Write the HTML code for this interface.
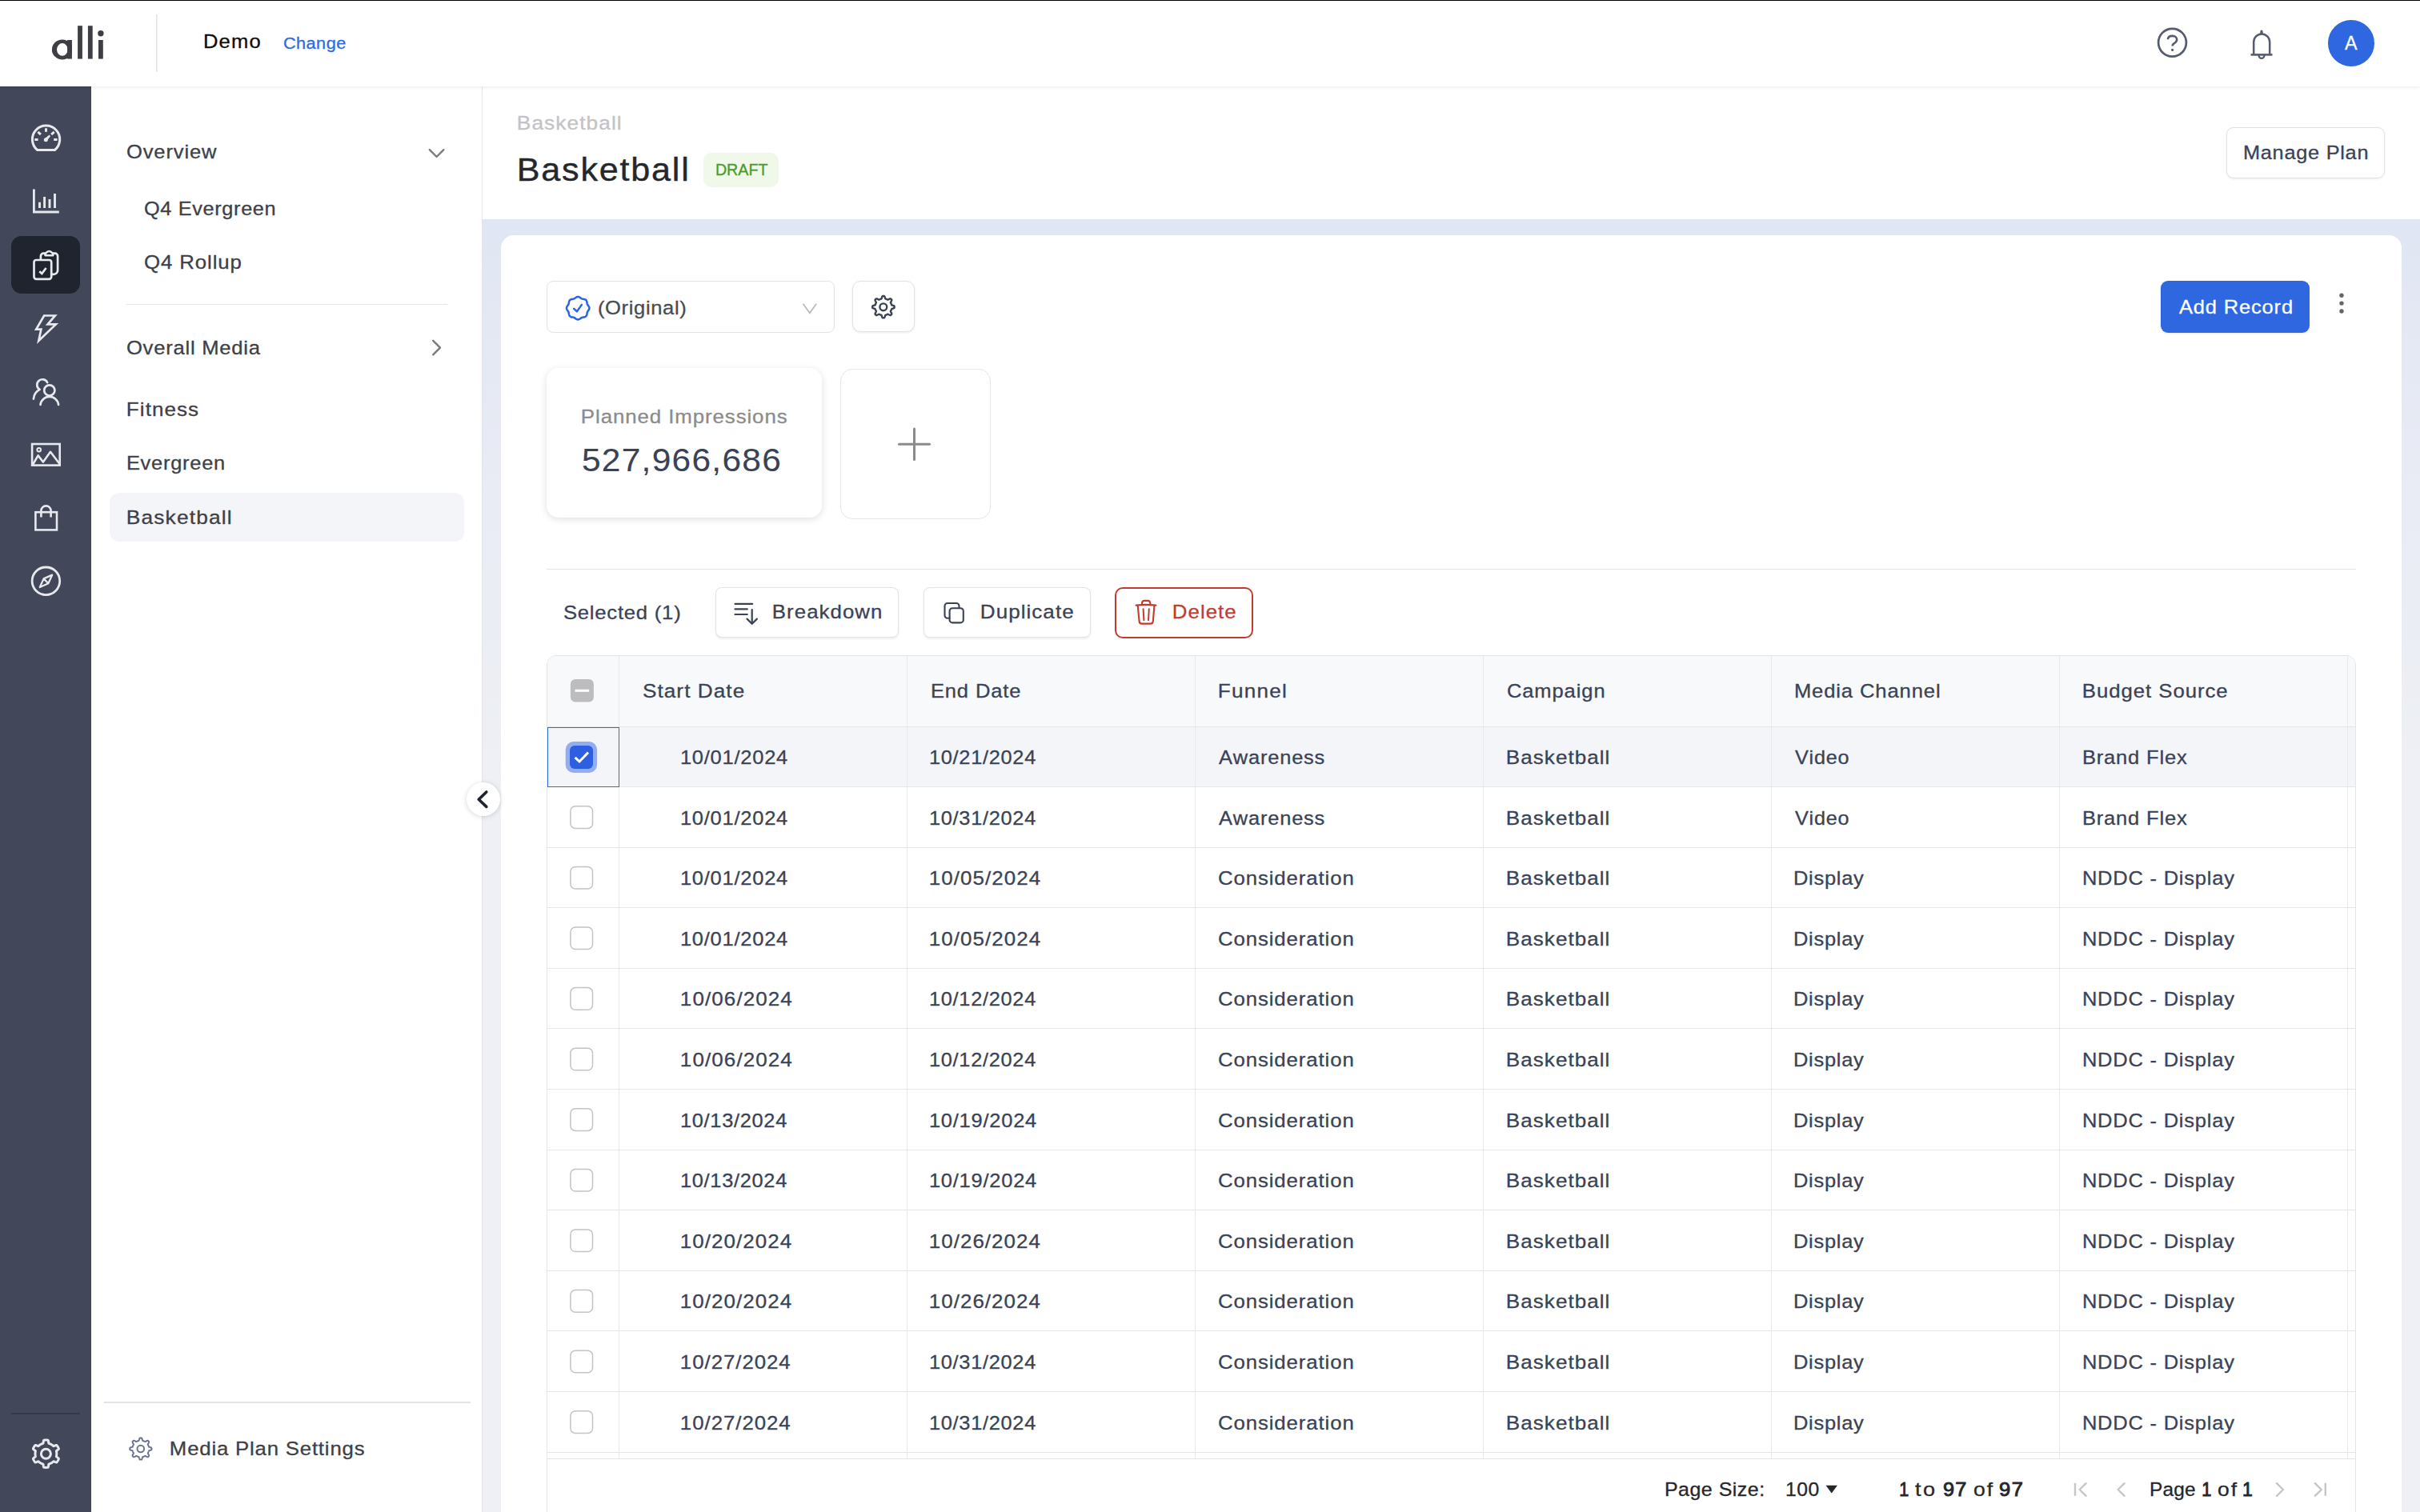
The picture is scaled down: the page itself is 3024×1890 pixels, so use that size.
<!DOCTYPE html>
<html><head><meta charset="utf-8"><title>Basketball - Media Plan</title>
<style>
html,body{margin:0;padding:0;background:#fff;}
body{width:3024px;height:1890px;overflow:hidden;position:relative;font-family:"Liberation Sans",sans-serif;}
#root{position:absolute;left:0;top:0;width:3024px;height:1890px;overflow:hidden;transform-origin:0 0;}
@media (max-width:2000px){body{width:1512px;height:945px}#root{transform:scale(0.5)}}
.b{position:absolute;}
.t{position:absolute;white-space:pre;line-height:1em;font-kerning:none;font-family:"Liberation Sans",sans-serif;z-index:2;-webkit-text-stroke:0.3px currentColor}
.ov{position:absolute;left:0;top:0;z-index:8;pointer-events:none}
</style></head><body><div id="root">
<div class="b" style="left:0;top:0;width:3024px;height:1px;background:#000;z-index:5"></div>
<div class="b" style="left:0;top:1px;width:3024px;height:107px;background:#fff;box-shadow:0 1px 5px rgba(0,0,0,0.085);z-index:3"></div>
<div class="b" style="left:0;top:108px;width:114px;height:1782px;background:#424759"></div>
<div class="b" style="left:14px;top:295px;width:86px;height:72px;background:#20242f;border-radius:13px"></div>
<div class="b" style="left:14px;top:1766px;width:86px;height:2px;background:#343849"></div>
<div class="b" style="left:114px;top:108px;width:488px;height:1782px;background:#fff"></div>
<div class="b" style="left:602px;top:108px;width:1px;height:1782px;background:#e6e6e9"></div>
<div class="b" style="left:158px;top:379.5px;width:401px;height:1.5px;background:#e6e6e9"></div>
<div class="b" style="left:137px;top:616px;width:443px;height:61px;background:#f4f5f9;border-radius:12px"></div>
<div class="b" style="left:130px;top:1752px;width:458px;height:1.5px;background:#e4e4e7"></div>
<div class="b" style="left:603px;top:108px;width:2421px;height:166px;background:#fff"></div>
<div class="b" style="left:603px;top:274px;width:2421px;height:1616px;background:linear-gradient(#e0e6f3 0px,#e8ebf4 300px,#eef0f5 700px,#eff0f5 1616px)"></div>
<div class="b" style="left:626px;top:294px;width:2375px;height:1700px;background:#fff;border-radius:16px"></div>
<div class="b" style="left:879px;top:191px;width:94px;height:43px;background:#eff8e9;border-radius:10px"></div>
<div class="b" style="left:2781.5px;top:158.5px;width:198.5px;height:64px;box-sizing:border-box;border:1.5px solid #e2e2e4;border-radius:9px;background:#fff;box-shadow:0 1px 3px rgba(0,0,0,0.07)"></div>
<div class="b" style="left:682.6px;top:350.8px;width:360.5px;height:65.4px;box-sizing:border-box;border:1.5px solid #e3e3e6;border-radius:8px;background:#fff"></div>
<div class="b" style="left:1065.2px;top:350.8px;width:78.2px;height:64.4px;box-sizing:border-box;border:1.5px solid #e3e3e6;border-radius:10px;background:#fff;box-shadow:0 1px 3px rgba(0,0,0,0.08)"></div>
<div class="b" style="left:2700px;top:351px;width:186px;height:65px;background:#2f67e0;border-radius:9px;box-shadow:0 1px 3px rgba(0,0,0,0.1)"></div>
<div class="b" style="left:683px;top:460px;width:344px;height:187px;background:#fff;border-radius:15px;box-shadow:0 2px 10px rgba(0,0,0,0.13)"></div>
<div class="b" style="left:1049.5px;top:460.5px;width:188px;height:188px;box-sizing:border-box;border:1.5px solid #e6e6e9;border-radius:15px;background:#fff"></div>
<div class="b" style="left:683px;top:711px;width:2261px;height:1px;background:#e4e5e8"></div>
<div class="b" style="left:893.5px;top:733.5px;width:229.5px;height:63.5px;box-sizing:border-box;border:1.5px solid #e3e3e6;border-radius:8px;background:#fff;box-shadow:0 1.5px 3px rgba(0,0,0,0.07)"></div>
<div class="b" style="left:1154px;top:733.5px;width:208.5px;height:63.5px;box-sizing:border-box;border:1.5px solid #e3e3e6;border-radius:8px;background:#fff;box-shadow:0 1.5px 3px rgba(0,0,0,0.07)"></div>
<div class="b" style="left:1392.5px;top:733.5px;width:173px;height:64px;box-sizing:border-box;border:2px solid #c23b2f;border-radius:10px;background:#fff"></div>
<div class="b" style="left:683.0px;top:819.0px;width:2261.0px;height:1200px;box-sizing:border-box;border:1px solid #e4e5e8;border-radius:12px;background:#fff;overflow:hidden"></div>
<div class="b" style="left:684.0px;top:820.0px;width:2259.0px;height:89px;background:#f8f9fb;border-radius:11px 11px 0 0"></div>
<div class="b" style="left:684.0px;top:908px;width:2259.0px;height:1px;background:#e4e5e8"></div>
<div class="b" style="left:684.0px;top:909px;width:2259.0px;height:74px;background:#f4f5f9"></div>
<div class="b" style="left:684.0px;top:983px;width:2259.0px;height:1px;background:#e5e6e9"></div>
<div class="b" style="left:684.0px;top:1059px;width:2259.0px;height:1px;background:#e5e6e9"></div>
<div class="b" style="left:684.0px;top:1134px;width:2259.0px;height:1px;background:#e5e6e9"></div>
<div class="b" style="left:684.0px;top:1210px;width:2259.0px;height:1px;background:#e5e6e9"></div>
<div class="b" style="left:684.0px;top:1285px;width:2259.0px;height:1px;background:#e5e6e9"></div>
<div class="b" style="left:684.0px;top:1361px;width:2259.0px;height:1px;background:#e5e6e9"></div>
<div class="b" style="left:684.0px;top:1437px;width:2259.0px;height:1px;background:#e5e6e9"></div>
<div class="b" style="left:684.0px;top:1512px;width:2259.0px;height:1px;background:#e5e6e9"></div>
<div class="b" style="left:684.0px;top:1588px;width:2259.0px;height:1px;background:#e5e6e9"></div>
<div class="b" style="left:684.0px;top:1663px;width:2259.0px;height:1px;background:#e5e6e9"></div>
<div class="b" style="left:684.0px;top:1739px;width:2259.0px;height:1px;background:#e5e6e9"></div>
<div class="b" style="left:684.0px;top:1815px;width:2259.0px;height:1px;background:#e5e6e9"></div>
<div class="b" style="left:684.0px;top:1822.5px;width:2259.0px;height:1px;background:#e4e5e8"></div>
<div class="b" style="left:684.0px;top:1823.5px;width:2259.0px;height:100px;background:#fff"></div>
<div class="b" style="left:773px;top:820.0px;width:1px;height:1002.5px;background:#e8e9ec"></div>
<div class="b" style="left:1133px;top:820.0px;width:1px;height:1002.5px;background:#e8e9ec"></div>
<div class="b" style="left:1493px;top:820.0px;width:1px;height:1002.5px;background:#e8e9ec"></div>
<div class="b" style="left:1853px;top:820.0px;width:1px;height:1002.5px;background:#e8e9ec"></div>
<div class="b" style="left:2213px;top:820.0px;width:1px;height:1002.5px;background:#e8e9ec"></div>
<div class="b" style="left:2573px;top:820.0px;width:1px;height:1002.5px;background:#e8e9ec"></div>
<div class="b" style="left:2933px;top:820.0px;width:1px;height:1002.5px;background:#e8e9ec"></div>
<div class="b" style="left:683.5px;top:908.5px;width:90.5px;height:75px;box-sizing:border-box;border:1.6px solid #2f6ae3"></div>
<div class="b" style="left:582.5px;top:978px;width:42px;height:42px;border-radius:50%;background:#fff;box-shadow:0 1px 6px rgba(0,0,0,0.16);z-index:6"></div>
<div class="b" style="left:2909px;top:25px;width:57.5px;height:57.5px;border-radius:50%;background:#2f67e0;z-index:4"></div>
<div class="t" style="left:253.62px;top:40.43px;font-size:24.17px;letter-spacing:1.18px;color:#0b0b0c;transform:scaleX(1.0578);transform-origin:1.98px 0;z-index:4">Demo</div>
<div class="t" style="left:354.13px;top:43.07px;font-size:21.06px;letter-spacing:0.44px;color:#2d6ae3;transform:scaleX(1.0305);transform-origin:1.07px 0;z-index:4">Change</div>
<div class="t" style="left:2929.95px;top:41.69px;font-size:23.98px;letter-spacing:0px;color:#fff;transform:scaleX(0.9712);transform-origin:0.05px 0;z-index:5">A</div>
<div class="t" style="left:158.26px;top:178.33px;font-size:24.17px;letter-spacing:0.82px;color:#3d4047;transform:scaleX(1.0577);transform-origin:1.14px 0">Overview</div>
<div class="t" style="left:179.86px;top:248.93px;font-size:24.17px;letter-spacing:0.63px;color:#3d4047;transform:scaleX(1.0470);transform-origin:1.14px 0">Q4 Evergreen</div>
<div class="t" style="left:179.86px;top:316.03px;font-size:24.17px;letter-spacing:0.87px;color:#3d4047;transform:scaleX(1.0664);transform-origin:1.14px 0">Q4 Rollup</div>
<div class="t" style="left:158.46px;top:422.73px;font-size:24.17px;letter-spacing:0.73px;color:#3d4047;transform:scaleX(1.0591);transform-origin:1.14px 0">Overall Media</div>
<div class="t" style="left:157.62px;top:499.83px;font-size:24.17px;letter-spacing:0.98px;color:#3d4047;transform:scaleX(1.0784);transform-origin:1.98px 0">Fitness</div>
<div class="t" style="left:157.62px;top:567.23px;font-size:24.17px;letter-spacing:0.71px;color:#3d4047;transform:scaleX(1.0529);transform-origin:1.98px 0">Evergreen</div>
<div class="t" style="left:157.62px;top:634.53px;font-size:24.17px;letter-spacing:1.06px;color:#3d4047;transform:scaleX(1.0886);transform-origin:1.98px 0">Basketball</div>
<div class="t" style="left:211.77px;top:1799.03px;font-size:24.17px;letter-spacing:0.77px;color:#3d4047;transform:scaleX(1.0653);transform-origin:1.98px 0">Media Plan Settings</div>
<div class="t" style="left:645.92px;top:142.43px;font-size:24.17px;letter-spacing:1.02px;color:#c3c3c5;transform:scaleX(1.0847);transform-origin:1.98px 0">Basketball</div>
<div class="t" style="left:646.03px;top:193.29px;font-size:39.81px;letter-spacing:1.65px;color:#25272b;transform:scaleX(1.0833);transform-origin:3.27px 0;-webkit-text-stroke:0.4px #25272b">Basketball</div>
<div class="t" style="left:893.89px;top:203.05px;font-size:19.67px;letter-spacing:0.01px;color:#4a9b2c">DRAFT</div>
<div class="t" style="left:2802.82px;top:178.53px;font-size:24.17px;letter-spacing:0.69px;color:#3a4256;transform:scaleX(1.0495);transform-origin:1.98px 0">Manage Plan</div>
<div class="t" style="left:746.5px;top:373.13px;font-size:24.17px;letter-spacing:0.61px;color:#4a4b4f;transform:scaleX(1.0570);transform-origin:1.5px 0">(Original)</div>
<div class="t" style="left:2722.85px;top:371.53px;font-size:24.17px;letter-spacing:0.78px;color:#ffffff;transform:scaleX(1.0557);transform-origin:0.05px 0">Add Record</div>
<div class="t" style="left:726.22px;top:508.83px;font-size:24.17px;letter-spacing:0.86px;color:#8b8b8d;transform:scaleX(1.0692);transform-origin:1.98px 0">Planned Impressions</div>
<div class="t" style="left:727.39px;top:555.89px;font-size:40.29px;letter-spacing:1.2px;color:#3a4256;transform:scaleX(1.0545);transform-origin:1.61px 0;-webkit-text-stroke:0.1px #3a4256">527,966,686</div>
<div class="t" style="left:703.8px;top:753.93px;font-size:24.17px;letter-spacing:0.72px;color:#3a4256;transform:scaleX(1.0621);transform-origin:1.1px 0">Selected (1)</div>
<div class="t" style="left:964.82px;top:753.23px;font-size:24.17px;letter-spacing:0.99px;color:#3a4256;transform:scaleX(1.0676);transform-origin:1.98px 0">Breakdown</div>
<div class="t" style="left:1225.02px;top:753.23px;font-size:24.17px;letter-spacing:0.95px;color:#3a4256;transform:scaleX(1.0782);transform-origin:1.98px 0">Duplicate</div>
<div class="t" style="left:1464.82px;top:753.23px;font-size:24.17px;letter-spacing:0.94px;color:#c23b2f;transform:scaleX(1.0707);transform-origin:1.98px 0">Delete</div>
<div class="t" style="left:802.9px;top:851.83px;font-size:24.17px;letter-spacing:0.98px;color:#3a4256;transform:scaleX(1.0830);transform-origin:1.1px 0">Start Date</div>
<div class="t" style="left:1162.72px;top:851.83px;font-size:24.17px;letter-spacing:0.81px;color:#3a4256;transform:scaleX(1.0580);transform-origin:1.98px 0">End Date</div>
<div class="t" style="left:1521.52px;top:851.83px;font-size:24.17px;letter-spacing:1.14px;color:#3a4256;transform:scaleX(1.0812);transform-origin:1.98px 0">Funnel</div>
<div class="t" style="left:1882.67px;top:851.83px;font-size:24.17px;letter-spacing:0.86px;color:#3a4256;transform:scaleX(1.0562);transform-origin:1.23px 0">Campaign</div>
<div class="t" style="left:2242.42px;top:851.83px;font-size:24.17px;letter-spacing:0.81px;color:#3a4256;transform:scaleX(1.0611);transform-origin:1.98px 0">Media Channel</div>
<div class="t" style="left:2602.02px;top:851.83px;font-size:24.17px;letter-spacing:0.88px;color:#3a4256;transform:scaleX(1.0670);transform-origin:1.98px 0">Budget Source</div>
<div class="t" style="left:850.36px;top:935.03px;font-size:24.17px;letter-spacing:0.72px;color:#3a4256;transform:scaleX(1.0550);transform-origin:1.84px 0">10/01/2024</div>
<div class="t" style="left:1161.16px;top:935.03px;font-size:24.17px;letter-spacing:0.67px;color:#3a4256;transform:scaleX(1.0510);transform-origin:1.84px 0">10/21/2024</div>
<div class="t" style="left:1522.95px;top:935.03px;font-size:24.17px;letter-spacing:0.78px;color:#3a4256;transform:scaleX(1.0525);transform-origin:0.05px 0">Awareness</div>
<div class="t" style="left:1881.92px;top:935.03px;font-size:24.17px;letter-spacing:0.95px;color:#3a4256;transform:scaleX(1.0792);transform-origin:1.98px 0">Basketball</div>
<div class="t" style="left:2242.89px;top:935.03px;font-size:24.17px;letter-spacing:0.69px;color:#3a4256;transform:scaleX(1.0453);transform-origin:0.11px 0">Video</div>
<div class="t" style="left:2602.02px;top:935.03px;font-size:24.17px;letter-spacing:0.75px;color:#3a4256;transform:scaleX(1.0587);transform-origin:1.98px 0">Brand Flex</div>
<div class="t" style="left:850.36px;top:1010.63px;font-size:24.17px;letter-spacing:0.72px;color:#3a4256;transform:scaleX(1.0550);transform-origin:1.84px 0">10/01/2024</div>
<div class="t" style="left:1161.16px;top:1010.63px;font-size:24.17px;letter-spacing:0.67px;color:#3a4256;transform:scaleX(1.0510);transform-origin:1.84px 0">10/31/2024</div>
<div class="t" style="left:1522.95px;top:1010.63px;font-size:24.17px;letter-spacing:0.78px;color:#3a4256;transform:scaleX(1.0525);transform-origin:0.05px 0">Awareness</div>
<div class="t" style="left:1881.92px;top:1010.63px;font-size:24.17px;letter-spacing:0.95px;color:#3a4256;transform:scaleX(1.0792);transform-origin:1.98px 0">Basketball</div>
<div class="t" style="left:2242.89px;top:1010.63px;font-size:24.17px;letter-spacing:0.69px;color:#3a4256;transform:scaleX(1.0453);transform-origin:0.11px 0">Video</div>
<div class="t" style="left:2602.02px;top:1010.63px;font-size:24.17px;letter-spacing:0.75px;color:#3a4256;transform:scaleX(1.0587);transform-origin:1.98px 0">Brand Flex</div>
<div class="t" style="left:850.36px;top:1086.23px;font-size:24.17px;letter-spacing:0.72px;color:#3a4256;transform:scaleX(1.0550);transform-origin:1.84px 0">10/01/2024</div>
<div class="t" style="left:1161.16px;top:1086.23px;font-size:24.17px;letter-spacing:0.98px;color:#3a4256;transform:scaleX(1.0742);transform-origin:1.84px 0">10/05/2024</div>
<div class="t" style="left:1521.77px;top:1086.23px;font-size:24.17px;letter-spacing:0.83px;color:#3a4256;transform:scaleX(1.0679);transform-origin:1.23px 0">Consideration</div>
<div class="t" style="left:1881.92px;top:1086.23px;font-size:24.17px;letter-spacing:0.95px;color:#3a4256;transform:scaleX(1.0792);transform-origin:1.98px 0">Basketball</div>
<div class="t" style="left:2241.02px;top:1086.23px;font-size:24.17px;letter-spacing:0.7px;color:#3a4256;transform:scaleX(1.0547);transform-origin:1.98px 0">Display</div>
<div class="t" style="left:2602.02px;top:1086.23px;font-size:24.17px;letter-spacing:0.73px;color:#3a4256;transform:scaleX(1.0563);transform-origin:1.98px 0">NDDC - Display</div>
<div class="t" style="left:850.36px;top:1161.83px;font-size:24.17px;letter-spacing:0.72px;color:#3a4256;transform:scaleX(1.0550);transform-origin:1.84px 0">10/01/2024</div>
<div class="t" style="left:1161.16px;top:1161.83px;font-size:24.17px;letter-spacing:0.98px;color:#3a4256;transform:scaleX(1.0742);transform-origin:1.84px 0">10/05/2024</div>
<div class="t" style="left:1521.77px;top:1161.83px;font-size:24.17px;letter-spacing:0.83px;color:#3a4256;transform:scaleX(1.0679);transform-origin:1.23px 0">Consideration</div>
<div class="t" style="left:1881.92px;top:1161.83px;font-size:24.17px;letter-spacing:0.95px;color:#3a4256;transform:scaleX(1.0792);transform-origin:1.98px 0">Basketball</div>
<div class="t" style="left:2241.02px;top:1161.83px;font-size:24.17px;letter-spacing:0.7px;color:#3a4256;transform:scaleX(1.0547);transform-origin:1.98px 0">Display</div>
<div class="t" style="left:2602.02px;top:1161.83px;font-size:24.17px;letter-spacing:0.73px;color:#3a4256;transform:scaleX(1.0563);transform-origin:1.98px 0">NDDC - Display</div>
<div class="t" style="left:850.36px;top:1237.43px;font-size:24.17px;letter-spacing:1.01px;color:#3a4256;transform:scaleX(1.0767);transform-origin:1.84px 0">10/06/2024</div>
<div class="t" style="left:1161.16px;top:1237.43px;font-size:24.17px;letter-spacing:0.67px;color:#3a4256;transform:scaleX(1.0510);transform-origin:1.84px 0">10/12/2024</div>
<div class="t" style="left:1521.77px;top:1237.43px;font-size:24.17px;letter-spacing:0.83px;color:#3a4256;transform:scaleX(1.0679);transform-origin:1.23px 0">Consideration</div>
<div class="t" style="left:1881.92px;top:1237.43px;font-size:24.17px;letter-spacing:0.95px;color:#3a4256;transform:scaleX(1.0792);transform-origin:1.98px 0">Basketball</div>
<div class="t" style="left:2241.02px;top:1237.43px;font-size:24.17px;letter-spacing:0.7px;color:#3a4256;transform:scaleX(1.0547);transform-origin:1.98px 0">Display</div>
<div class="t" style="left:2602.02px;top:1237.43px;font-size:24.17px;letter-spacing:0.73px;color:#3a4256;transform:scaleX(1.0563);transform-origin:1.98px 0">NDDC - Display</div>
<div class="t" style="left:850.36px;top:1313.03px;font-size:24.17px;letter-spacing:1.01px;color:#3a4256;transform:scaleX(1.0767);transform-origin:1.84px 0">10/06/2024</div>
<div class="t" style="left:1161.16px;top:1313.03px;font-size:24.17px;letter-spacing:0.67px;color:#3a4256;transform:scaleX(1.0510);transform-origin:1.84px 0">10/12/2024</div>
<div class="t" style="left:1521.77px;top:1313.03px;font-size:24.17px;letter-spacing:0.83px;color:#3a4256;transform:scaleX(1.0679);transform-origin:1.23px 0">Consideration</div>
<div class="t" style="left:1881.92px;top:1313.03px;font-size:24.17px;letter-spacing:0.95px;color:#3a4256;transform:scaleX(1.0792);transform-origin:1.98px 0">Basketball</div>
<div class="t" style="left:2241.02px;top:1313.03px;font-size:24.17px;letter-spacing:0.7px;color:#3a4256;transform:scaleX(1.0547);transform-origin:1.98px 0">Display</div>
<div class="t" style="left:2602.02px;top:1313.03px;font-size:24.17px;letter-spacing:0.73px;color:#3a4256;transform:scaleX(1.0563);transform-origin:1.98px 0">NDDC - Display</div>
<div class="t" style="left:850.36px;top:1388.63px;font-size:24.17px;letter-spacing:0.67px;color:#3a4256;transform:scaleX(1.0510);transform-origin:1.84px 0">10/13/2024</div>
<div class="t" style="left:1161.16px;top:1388.63px;font-size:24.17px;letter-spacing:0.72px;color:#3a4256;transform:scaleX(1.0545);transform-origin:1.84px 0">10/19/2024</div>
<div class="t" style="left:1521.77px;top:1388.63px;font-size:24.17px;letter-spacing:0.83px;color:#3a4256;transform:scaleX(1.0679);transform-origin:1.23px 0">Consideration</div>
<div class="t" style="left:1881.92px;top:1388.63px;font-size:24.17px;letter-spacing:0.95px;color:#3a4256;transform:scaleX(1.0792);transform-origin:1.98px 0">Basketball</div>
<div class="t" style="left:2241.02px;top:1388.63px;font-size:24.17px;letter-spacing:0.7px;color:#3a4256;transform:scaleX(1.0547);transform-origin:1.98px 0">Display</div>
<div class="t" style="left:2602.02px;top:1388.63px;font-size:24.17px;letter-spacing:0.73px;color:#3a4256;transform:scaleX(1.0563);transform-origin:1.98px 0">NDDC - Display</div>
<div class="t" style="left:850.36px;top:1464.23px;font-size:24.17px;letter-spacing:0.67px;color:#3a4256;transform:scaleX(1.0510);transform-origin:1.84px 0">10/13/2024</div>
<div class="t" style="left:1161.16px;top:1464.23px;font-size:24.17px;letter-spacing:0.72px;color:#3a4256;transform:scaleX(1.0545);transform-origin:1.84px 0">10/19/2024</div>
<div class="t" style="left:1521.77px;top:1464.23px;font-size:24.17px;letter-spacing:0.83px;color:#3a4256;transform:scaleX(1.0679);transform-origin:1.23px 0">Consideration</div>
<div class="t" style="left:1881.92px;top:1464.23px;font-size:24.17px;letter-spacing:0.95px;color:#3a4256;transform:scaleX(1.0792);transform-origin:1.98px 0">Basketball</div>
<div class="t" style="left:2241.02px;top:1464.23px;font-size:24.17px;letter-spacing:0.7px;color:#3a4256;transform:scaleX(1.0547);transform-origin:1.98px 0">Display</div>
<div class="t" style="left:2602.02px;top:1464.23px;font-size:24.17px;letter-spacing:0.73px;color:#3a4256;transform:scaleX(1.0563);transform-origin:1.98px 0">NDDC - Display</div>
<div class="t" style="left:850.36px;top:1539.83px;font-size:24.17px;letter-spacing:0.98px;color:#3a4256;transform:scaleX(1.0743);transform-origin:1.84px 0">10/20/2024</div>
<div class="t" style="left:1161.16px;top:1539.83px;font-size:24.17px;letter-spacing:0.96px;color:#3a4256;transform:scaleX(1.0729);transform-origin:1.84px 0">10/26/2024</div>
<div class="t" style="left:1521.77px;top:1539.83px;font-size:24.17px;letter-spacing:0.83px;color:#3a4256;transform:scaleX(1.0679);transform-origin:1.23px 0">Consideration</div>
<div class="t" style="left:1881.92px;top:1539.83px;font-size:24.17px;letter-spacing:0.95px;color:#3a4256;transform:scaleX(1.0792);transform-origin:1.98px 0">Basketball</div>
<div class="t" style="left:2241.02px;top:1539.83px;font-size:24.17px;letter-spacing:0.7px;color:#3a4256;transform:scaleX(1.0547);transform-origin:1.98px 0">Display</div>
<div class="t" style="left:2602.02px;top:1539.83px;font-size:24.17px;letter-spacing:0.73px;color:#3a4256;transform:scaleX(1.0563);transform-origin:1.98px 0">NDDC - Display</div>
<div class="t" style="left:850.36px;top:1615.43px;font-size:24.17px;letter-spacing:0.98px;color:#3a4256;transform:scaleX(1.0743);transform-origin:1.84px 0">10/20/2024</div>
<div class="t" style="left:1161.16px;top:1615.43px;font-size:24.17px;letter-spacing:0.96px;color:#3a4256;transform:scaleX(1.0729);transform-origin:1.84px 0">10/26/2024</div>
<div class="t" style="left:1521.77px;top:1615.43px;font-size:24.17px;letter-spacing:0.83px;color:#3a4256;transform:scaleX(1.0679);transform-origin:1.23px 0">Consideration</div>
<div class="t" style="left:1881.92px;top:1615.43px;font-size:24.17px;letter-spacing:0.95px;color:#3a4256;transform:scaleX(1.0792);transform-origin:1.98px 0">Basketball</div>
<div class="t" style="left:2241.02px;top:1615.43px;font-size:24.17px;letter-spacing:0.7px;color:#3a4256;transform:scaleX(1.0547);transform-origin:1.98px 0">Display</div>
<div class="t" style="left:2602.02px;top:1615.43px;font-size:24.17px;letter-spacing:0.73px;color:#3a4256;transform:scaleX(1.0563);transform-origin:1.98px 0">NDDC - Display</div>
<div class="t" style="left:850.36px;top:1691.03px;font-size:24.17px;letter-spacing:0.9px;color:#3a4256;transform:scaleX(1.0682);transform-origin:1.84px 0">10/27/2024</div>
<div class="t" style="left:1161.16px;top:1691.03px;font-size:24.17px;letter-spacing:0.67px;color:#3a4256;transform:scaleX(1.0510);transform-origin:1.84px 0">10/31/2024</div>
<div class="t" style="left:1521.77px;top:1691.03px;font-size:24.17px;letter-spacing:0.83px;color:#3a4256;transform:scaleX(1.0679);transform-origin:1.23px 0">Consideration</div>
<div class="t" style="left:1881.92px;top:1691.03px;font-size:24.17px;letter-spacing:0.95px;color:#3a4256;transform:scaleX(1.0792);transform-origin:1.98px 0">Basketball</div>
<div class="t" style="left:2241.02px;top:1691.03px;font-size:24.17px;letter-spacing:0.7px;color:#3a4256;transform:scaleX(1.0547);transform-origin:1.98px 0">Display</div>
<div class="t" style="left:2602.02px;top:1691.03px;font-size:24.17px;letter-spacing:0.73px;color:#3a4256;transform:scaleX(1.0563);transform-origin:1.98px 0">NDDC - Display</div>
<div class="t" style="left:850.36px;top:1766.63px;font-size:24.17px;letter-spacing:0.9px;color:#3a4256;transform:scaleX(1.0682);transform-origin:1.84px 0">10/27/2024</div>
<div class="t" style="left:1161.16px;top:1766.63px;font-size:24.17px;letter-spacing:0.67px;color:#3a4256;transform:scaleX(1.0510);transform-origin:1.84px 0">10/31/2024</div>
<div class="t" style="left:1521.77px;top:1766.63px;font-size:24.17px;letter-spacing:0.83px;color:#3a4256;transform:scaleX(1.0679);transform-origin:1.23px 0">Consideration</div>
<div class="t" style="left:1881.92px;top:1766.63px;font-size:24.17px;letter-spacing:0.95px;color:#3a4256;transform:scaleX(1.0792);transform-origin:1.98px 0">Basketball</div>
<div class="t" style="left:2241.02px;top:1766.63px;font-size:24.17px;letter-spacing:0.7px;color:#3a4256;transform:scaleX(1.0547);transform-origin:1.98px 0">Display</div>
<div class="t" style="left:2602.02px;top:1766.63px;font-size:24.17px;letter-spacing:0.73px;color:#3a4256;transform:scaleX(1.0563);transform-origin:1.98px 0">NDDC - Display</div>
<div class="t" style="left:2079.72px;top:1850.03px;font-size:24.17px;letter-spacing:0.45px;color:#25272b;transform:scaleX(1.0356);transform-origin:1.98px 0">Page Size:</div>
<div class="t" style="left:2231.16px;top:1850.03px;font-size:24.17px;letter-spacing:0.46px;color:#25272b;transform:scaleX(1.0244);transform-origin:1.84px 0">100</div>
<div class="t" style="left:2373.16px;top:1850.03px;font-size:24.17px;letter-spacing:0px;color:#25272b;transform:scaleX(0.8924);transform-origin:1.84px 0;-webkit-text-stroke:0.9px #25272b">1</div>
<div class="t" style="left:2393.33px;top:1850.03px;font-size:24.17px;letter-spacing:2.32px;color:#25272b;transform:scaleX(1.1234);transform-origin:0.37px 0">to</div>
<div class="t" style="left:2427.67px;top:1850.03px;font-size:24.17px;letter-spacing:1.15px;color:#25272b;transform:scaleX(1.0470);transform-origin:1.13px 0;-webkit-text-stroke:0.9px #25272b">97</div>
<div class="t" style="left:2465.58px;top:1850.03px;font-size:24.17px;letter-spacing:1.91px;color:#25272b;transform:scaleX(1.0998);transform-origin:1.02px 0">of</div>
<div class="t" style="left:2497.87px;top:1850.03px;font-size:24.17px;letter-spacing:1.44px;color:#25272b;transform:scaleX(1.0586);transform-origin:1.13px 0;-webkit-text-stroke:0.9px #25272b">97</div>
<div class="t" style="left:2685.52px;top:1850.03px;font-size:24.17px;letter-spacing:0.2px;color:#25272b;transform:scaleX(1.0112);transform-origin:1.98px 0">Page</div>
<div class="t" style="left:2750.86px;top:1850.03px;font-size:24.17px;letter-spacing:0px;color:#25272b;transform:scaleX(0.9084);transform-origin:1.84px 0;-webkit-text-stroke:0.9px #25272b">1</div>
<div class="t" style="left:2770.78px;top:1850.03px;font-size:24.17px;letter-spacing:1.87px;color:#25272b;transform:scaleX(1.0974);transform-origin:1.02px 0">of</div>
<div class="t" style="left:2801.66px;top:1850.03px;font-size:24.17px;letter-spacing:0px;color:#25272b;transform:scaleX(0.9547);transform-origin:1.84px 0;-webkit-text-stroke:0.9px #25272b">1</div>
<svg class="ov" width="3024" height="1890" viewBox="0 0 3024 1890"><defs><clipPath id="lc"><rect x="60" y="40" width="29.9" height="40"/></clipPath></defs><path clip-path="url(#lc)" fill="#3e3f44" fill-rule="evenodd" d="M77.85,49.4 A12.95,12.55 0 1 0 77.85,74.5 A12.95,12.55 0 1 0 77.85,49.4 Z M77.85,54.1 A6.85,7.85 0 1 1 77.85,69.8 A6.85,7.85 0 1 1 77.85,54.1 Z"/><rect x="84.1" y="50" width="5.8" height="23.6" fill="#3e3f44"/><rect x="97.1" y="32.2" width="5.8" height="41.4" fill="#3e3f44"/><rect x="109.9" y="32.2" width="5.8" height="41.4" fill="#3e3f44"/><rect x="123" y="50" width="5.8" height="23.6" fill="#3e3f44"/><circle cx="125.9" cy="41.7" r="3.7" fill="#3e3f44"/><rect x="195" y="18" width="1.5" height="72" fill="#e4e4e7"/><circle cx="2714.5" cy="53.2" r="17.4" fill="none" stroke="#555b70" stroke-width="2.7"/><path d="M2709,49.2 C2709,46.4 2711.5,44.9 2714.6,44.9 C2717.9,44.9 2720.2,46.9 2720.2,49.6 C2720.2,52.3 2718.2,53.4 2716.6,54.4 C2715.2,55.3 2714.6,56.2 2714.6,57.4" fill="none" stroke="#555b70" stroke-width="2.6" stroke-linecap="butt" stroke-linejoin="round" /><circle cx="2714.6" cy="62.4" r="1.6" fill="#555b70"/><path d="M2816.2,68.4 V52.6 A10,10.2 0 0 1 2836.2,52.6 V68.4" fill="none" stroke="#555b70" stroke-width="2.5" stroke-linecap="butt" stroke-linejoin="round" /><path d="M2812.5,68.4 L2839.5,68.4" fill="none" stroke="#555b70" stroke-width="2.6" stroke-linecap="butt" stroke-linejoin="round" /><path d="M2822.6,69.5 A3.4,3.4 0 0 0 2829.4,69.5" fill="none" stroke="#555b70" stroke-width="2.3" stroke-linecap="round" stroke-linejoin="round" /><path d="M2824,42.8 L2824.6,38.2 Q2826,36.6 2827.4,38.2 L2828,42.8 Z" fill="#555b70"/><path d="M46.65,187.5 A17.15,17.15 0 1 1 68.45,187.5 Z" fill="none" stroke="#e8e9ee" stroke-width="3" stroke-linecap="round" stroke-linejoin="round" /><path d="M57.5,160.3 L57.5,164.8" fill="none" stroke="#e8e9ee" stroke-width="3" stroke-linecap="butt" stroke-linejoin="round" /><path d="M47.4,164.8 L50.9,168.1" fill="none" stroke="#e8e9ee" stroke-width="3" stroke-linecap="butt" stroke-linejoin="round" /><path d="M67.7,164.8 L64.2,168.1" fill="none" stroke="#e8e9ee" stroke-width="3" stroke-linecap="butt" stroke-linejoin="round" /><path d="M43.3,174.5 L47.6,174.5" fill="none" stroke="#e8e9ee" stroke-width="3" stroke-linecap="butt" stroke-linejoin="round" /><path d="M67.2,174.5 L71.6,174.5" fill="none" stroke="#e8e9ee" stroke-width="3" stroke-linecap="butt" stroke-linejoin="round" /><path d="M55.6,173.6 L61.6,168.6 L63.0,170.2 L58.6,175.9 Z" fill="#e8e9ee"/><circle cx="57.3" cy="174.8" r="2.5" fill="#e8e9ee"/><path d="M42.4,236.5 L42.4,265 L73.8,265" fill="none" stroke="#e8e9ee" stroke-width="2.8" stroke-linecap="butt" stroke-linejoin="miter" /><path d="M49.5,252.8 L49.5,260" fill="none" stroke="#e8e9ee" stroke-width="2.9" stroke-linecap="butt" stroke-linejoin="round" /><path d="M55.6,246 L55.6,260" fill="none" stroke="#e8e9ee" stroke-width="2.9" stroke-linecap="butt" stroke-linejoin="round" /><path d="M62,249 L62,260" fill="none" stroke="#e8e9ee" stroke-width="2.9" stroke-linecap="butt" stroke-linejoin="round" /><path d="M68.5,242 L68.5,260" fill="none" stroke="#e8e9ee" stroke-width="2.9" stroke-linecap="butt" stroke-linejoin="round" /><path d="M50.9,325 V320.2 A3.6,3.6 0 0 1 54.5,316.6 H68.5 A3.6,3.6 0 0 1 72.1,320.2 V338 A4.8,4.8 0 0 1 67.3,342.8 H64.2" fill="none" stroke="#e8e9ee" stroke-width="2.7" stroke-linecap="round" stroke-linejoin="round" /><path d="M57,319.3 C56.1,319.3 56.2,317.6 57.3,316.4 C58.6,314.9 59.8,314 61.4,314 C63,314 64.2,314.9 65.5,316.4 C66.6,317.6 66.7,319.3 65.8,319.3 Z" fill="#20242f" stroke="#e8e9ee" stroke-width="2.6" stroke-linecap="round" stroke-linejoin="round" /><path d="M45.3,325 H61.4 A2.8,2.8 0 0 1 64.2,327.8 V346.1 A2.8,2.8 0 0 1 61.4,348.9 H45.3 A2.8,2.8 0 0 1 42.5,346.1 V327.8 A2.8,2.8 0 0 1 45.3,325 Z" fill="#20242f" stroke="#e8e9ee" stroke-width="2.7" stroke-linecap="round" stroke-linejoin="round" /><path d="M49.3,339.3 L52.3,342 L57.6,335" fill="none" stroke="#e8e9ee" stroke-width="2.7" stroke-linecap="butt" stroke-linejoin="miter" /><path d="M55.2,394.5 L68.9,394.5 L59.6,405.4 L69.8,405.4 L48.3,425.9 L51.4,411.6 L45.2,411.6 L55.2,394.5" fill="none" stroke="#e8e9ee" stroke-width="2.7" stroke-linecap="round" stroke-linejoin="miter" stroke-miterlimit="6"/><path d="M59.2,478.1 A6.8,6.8 0 1 0 49.6,486.9 C45.6,489 42.3,493.5 41.9,498.6" fill="none" stroke="#e8e9ee" stroke-width="2.7" stroke-linecap="round" stroke-linejoin="round" /><circle cx="61.8" cy="487.9" r="6.6" fill="none" stroke="#e8e9ee" stroke-width="2.7"/><path d="M50.5,505.8 A11.4,11.4 0 0 1 73.1,505.8" fill="none" stroke="#e8e9ee" stroke-width="2.7" stroke-linecap="round" stroke-linejoin="round" /><rect x="40.1" y="555" width="34.6" height="26.6" fill="none" stroke="#e8e9ee" stroke-width="2.6"/><circle cx="48.7" cy="562.3" r="2.3" fill="none" stroke="#e8e9ee" stroke-width="2"/><path d="M41.4,580 L47.6,569.4 L53.9,577.5 L63,564.8 L74.6,580" fill="none" stroke="#e8e9ee" stroke-width="2.6" stroke-linecap="round" stroke-linejoin="round" /><rect x="44.4" y="640.2" width="26.6" height="22.2" fill="none" stroke="#e8e9ee" stroke-width="2.6"/><path d="M51.4,646.5 V638.5 A6.1,6.1 0 0 1 63.6,638.5 V646.5" fill="none" stroke="#e8e9ee" stroke-width="2.6" stroke-linecap="butt" stroke-linejoin="round" /><circle cx="57.4" cy="726.3" r="17.3" fill="none" stroke="#e8e9ee" stroke-width="2.8"/><path d="M49.8,734 L54.6,723.4 L65.2,718.6 L60.4,729.2 Z M54.6,723.4 L60.4,729.2" fill="none" stroke="#e8e9ee" stroke-width="2.3" stroke-linecap="round" stroke-linejoin="round" /><path d="M57.4,1800 L57.74,1800 L58.08,1800.01 L58.41,1800.03 L58.75,1800.05 L59.09,1800.08 L59.42,1800.12 L59.76,1800.16 L60.08,1800.29 L60.33,1800.81 L60.5,1801.62 L60.62,1802.54 L60.71,1803.41 L60.83,1804.05 L61.04,1804.3 L61.29,1804.38 L61.54,1804.46 L61.79,1804.54 L62.04,1804.63 L62.28,1804.72 L62.53,1804.82 L62.77,1804.92 L63.01,1805.03 L63.25,1805.14 L63.48,1805.26 L63.72,1805.38 L63.95,1805.51 L64.18,1805.64 L64.4,1805.77 L64.62,1805.91 L64.84,1806.06 L65.06,1806.21 L65.28,1806.36 L65.49,1806.52 L65.7,1806.68 L65.9,1806.84 L66.1,1807.01 L66.3,1807.18 L66.5,1807.36 L66.69,1807.54 L66.93,1807.67 L67.46,1807.53 L68.21,1807.21 L69.06,1806.84 L69.88,1806.54 L70.55,1806.41 L70.91,1806.55 L71.11,1806.82 L71.32,1807.09 L71.51,1807.37 L71.7,1807.64 L71.89,1807.93 L72.07,1808.21 L72.24,1808.5 L72.41,1808.8 L72.57,1809.09 L72.73,1809.39 L72.88,1809.69 L73.02,1810 L73.16,1810.31 L73.29,1810.62 L73.41,1810.94 L73.21,1811.37 L72.67,1811.9 L71.95,1812.47 L71.22,1813.01 L70.63,1813.47 L70.38,1813.81 L70.43,1814.07 L70.49,1814.33 L70.54,1814.59 L70.59,1814.84 L70.64,1815.1 L70.67,1815.36 L70.71,1815.62 L70.74,1815.89 L70.76,1816.15 L70.78,1816.41 L70.79,1816.67 L70.8,1816.94 L70.8,1817.2 L70.8,1817.46 L70.79,1817.73 L70.78,1817.99 L70.76,1818.25 L70.74,1818.51 L70.71,1818.78 L70.67,1819.04 L70.64,1819.3 L70.59,1819.56 L70.54,1819.81 L70.49,1820.07 L70.43,1820.33 L70.38,1820.59 L70.63,1820.93 L71.22,1821.39 L71.95,1821.93 L72.67,1822.5 L73.21,1823.03 L73.41,1823.46 L73.29,1823.78 L73.16,1824.09 L73.02,1824.4 L72.88,1824.71 L72.73,1825.01 L72.57,1825.31 L72.41,1825.6 L72.24,1825.9 L72.07,1826.19 L71.89,1826.47 L71.7,1826.76 L71.51,1827.03 L71.32,1827.31 L71.11,1827.58 L70.91,1827.85 L70.55,1827.99 L69.88,1827.86 L69.06,1827.56 L68.21,1827.19 L67.46,1826.87 L66.93,1826.73 L66.69,1826.86 L66.5,1827.04 L66.3,1827.22 L66.1,1827.39 L65.9,1827.56 L65.7,1827.72 L65.49,1827.88 L65.28,1828.04 L65.06,1828.19 L64.84,1828.34 L64.62,1828.49 L64.4,1828.63 L64.18,1828.76 L63.95,1828.89 L63.72,1829.02 L63.48,1829.14 L63.25,1829.26 L63.01,1829.37 L62.77,1829.48 L62.53,1829.58 L62.28,1829.68 L62.04,1829.77 L61.79,1829.86 L61.54,1829.94 L61.29,1830.02 L61.04,1830.1 L60.83,1830.35 L60.71,1830.99 L60.62,1831.86 L60.5,1832.78 L60.33,1833.59 L60.08,1834.11 L59.76,1834.24 L59.42,1834.28 L59.09,1834.32 L58.75,1834.35 L58.41,1834.37 L58.08,1834.39 L57.74,1834.4 L57.4,1834.4 L57.06,1834.4 L56.72,1834.39 L56.39,1834.37 L56.05,1834.35 L55.71,1834.32 L55.38,1834.28 L55.04,1834.24 L54.72,1834.11 L54.47,1833.59 L54.3,1832.78 L54.18,1831.86 L54.09,1830.99 L53.97,1830.35 L53.76,1830.1 L53.51,1830.02 L53.26,1829.94 L53.01,1829.86 L52.76,1829.77 L52.52,1829.68 L52.27,1829.58 L52.03,1829.48 L51.79,1829.37 L51.55,1829.26 L51.32,1829.14 L51.08,1829.02 L50.85,1828.89 L50.62,1828.76 L50.4,1828.63 L50.18,1828.49 L49.96,1828.34 L49.74,1828.19 L49.52,1828.04 L49.31,1827.88 L49.1,1827.72 L48.9,1827.56 L48.7,1827.39 L48.5,1827.22 L48.3,1827.04 L48.11,1826.86 L47.87,1826.73 L47.34,1826.87 L46.59,1827.19 L45.74,1827.56 L44.92,1827.86 L44.25,1827.99 L43.89,1827.85 L43.69,1827.58 L43.48,1827.31 L43.29,1827.03 L43.1,1826.76 L42.91,1826.47 L42.73,1826.19 L42.56,1825.9 L42.39,1825.6 L42.23,1825.31 L42.07,1825.01 L41.92,1824.71 L41.78,1824.4 L41.64,1824.09 L41.51,1823.78 L41.39,1823.46 L41.59,1823.03 L42.13,1822.5 L42.85,1821.93 L43.58,1821.39 L44.17,1820.93 L44.42,1820.59 L44.37,1820.33 L44.31,1820.07 L44.26,1819.81 L44.21,1819.56 L44.16,1819.3 L44.13,1819.04 L44.09,1818.78 L44.06,1818.51 L44.04,1818.25 L44.02,1817.99 L44.01,1817.73 L44,1817.46 L44,1817.2 L44,1816.94 L44.01,1816.67 L44.02,1816.41 L44.04,1816.15 L44.06,1815.89 L44.09,1815.62 L44.13,1815.36 L44.16,1815.1 L44.21,1814.84 L44.26,1814.59 L44.31,1814.33 L44.37,1814.07 L44.42,1813.81 L44.17,1813.47 L43.58,1813.01 L42.85,1812.47 L42.13,1811.9 L41.59,1811.37 L41.39,1810.94 L41.51,1810.62 L41.64,1810.31 L41.78,1810 L41.92,1809.69 L42.07,1809.39 L42.23,1809.09 L42.39,1808.8 L42.56,1808.5 L42.73,1808.21 L42.91,1807.93 L43.1,1807.64 L43.29,1807.37 L43.48,1807.09 L43.69,1806.82 L43.89,1806.55 L44.25,1806.41 L44.92,1806.54 L45.74,1806.84 L46.59,1807.21 L47.34,1807.53 L47.87,1807.67 L48.11,1807.54 L48.3,1807.36 L48.5,1807.18 L48.7,1807.01 L48.9,1806.84 L49.1,1806.68 L49.31,1806.52 L49.52,1806.36 L49.74,1806.21 L49.96,1806.06 L50.18,1805.91 L50.4,1805.77 L50.62,1805.64 L50.85,1805.51 L51.08,1805.38 L51.32,1805.26 L51.55,1805.14 L51.79,1805.03 L52.03,1804.92 L52.27,1804.82 L52.52,1804.72 L52.76,1804.63 L53.01,1804.54 L53.26,1804.46 L53.51,1804.38 L53.76,1804.3 L53.97,1804.05 L54.09,1803.41 L54.18,1802.54 L54.3,1801.62 L54.47,1800.81 L54.72,1800.29 L55.04,1800.16 L55.38,1800.12 L55.71,1800.08 L56.05,1800.05 L56.39,1800.03 L56.72,1800.01 L57.06,1800 Z" fill="none" stroke="#e8e9ee" stroke-width="3" stroke-linecap="round" stroke-linejoin="round" /><circle cx="57.4" cy="1817.2" r="6" fill="none" stroke="#e8e9ee" stroke-width="3"/><path d="M175.85,1797.4 L176.12,1797.4 L176.38,1797.41 L176.65,1797.42 L176.91,1797.5 L177.15,1797.76 L177.37,1798.15 L177.56,1798.63 L177.73,1799.15 L177.87,1799.67 L178.01,1800.15 L178.14,1800.55 L178.29,1800.83 L178.48,1800.94 L178.67,1800.99 L178.87,1801.05 L179.06,1801.11 L179.26,1801.17 L179.45,1801.24 L179.64,1801.32 L179.83,1801.39 L180.02,1801.47 L180.2,1801.56 L180.39,1801.64 L180.57,1801.73 L180.75,1801.83 L180.93,1801.93 L181.11,1802.03 L181.32,1802.08 L181.62,1801.99 L181.99,1801.81 L182.43,1801.56 L182.9,1801.29 L183.39,1801.04 L183.86,1800.84 L184.29,1800.72 L184.64,1800.71 L184.88,1800.83 L185.08,1801.01 L185.28,1801.2 L185.47,1801.38 L185.65,1801.57 L185.84,1801.77 L186.02,1801.97 L186.14,1802.21 L186.13,1802.56 L186.01,1802.99 L185.81,1803.46 L185.56,1803.95 L185.29,1804.42 L185.04,1804.86 L184.86,1805.23 L184.77,1805.53 L184.82,1805.74 L184.92,1805.92 L185.02,1806.1 L185.12,1806.28 L185.21,1806.46 L185.29,1806.65 L185.38,1806.83 L185.46,1807.02 L185.53,1807.21 L185.61,1807.4 L185.68,1807.59 L185.74,1807.79 L185.8,1807.98 L185.86,1808.18 L185.91,1808.37 L186.02,1808.56 L186.3,1808.71 L186.7,1808.84 L187.18,1808.98 L187.7,1809.12 L188.22,1809.29 L188.7,1809.48 L189.09,1809.7 L189.35,1809.94 L189.43,1810.2 L189.44,1810.47 L189.45,1810.73 L189.45,1811 L189.45,1811.27 L189.44,1811.53 L189.43,1811.8 L189.35,1812.06 L189.09,1812.3 L188.7,1812.52 L188.22,1812.71 L187.7,1812.88 L187.18,1813.02 L186.7,1813.16 L186.3,1813.29 L186.02,1813.44 L185.91,1813.63 L185.86,1813.82 L185.8,1814.02 L185.74,1814.21 L185.68,1814.41 L185.61,1814.6 L185.53,1814.79 L185.46,1814.98 L185.38,1815.17 L185.29,1815.35 L185.21,1815.54 L185.12,1815.72 L185.02,1815.9 L184.92,1816.08 L184.82,1816.26 L184.77,1816.47 L184.86,1816.77 L185.04,1817.14 L185.29,1817.58 L185.56,1818.05 L185.81,1818.54 L186.01,1819.01 L186.13,1819.44 L186.14,1819.79 L186.02,1820.03 L185.84,1820.23 L185.65,1820.43 L185.47,1820.62 L185.28,1820.8 L185.08,1820.99 L184.88,1821.17 L184.64,1821.29 L184.29,1821.28 L183.86,1821.16 L183.39,1820.96 L182.9,1820.71 L182.43,1820.44 L181.99,1820.19 L181.62,1820.01 L181.32,1819.92 L181.11,1819.97 L180.93,1820.07 L180.75,1820.17 L180.57,1820.27 L180.39,1820.36 L180.2,1820.44 L180.02,1820.53 L179.83,1820.61 L179.64,1820.68 L179.45,1820.76 L179.26,1820.83 L179.06,1820.89 L178.87,1820.95 L178.67,1821.01 L178.48,1821.06 L178.29,1821.17 L178.14,1821.45 L178.01,1821.85 L177.87,1822.33 L177.73,1822.85 L177.56,1823.37 L177.37,1823.85 L177.15,1824.24 L176.91,1824.5 L176.65,1824.58 L176.38,1824.59 L176.12,1824.6 L175.85,1824.6 L175.58,1824.6 L175.32,1824.59 L175.05,1824.58 L174.79,1824.5 L174.55,1824.24 L174.33,1823.85 L174.14,1823.37 L173.97,1822.85 L173.83,1822.33 L173.69,1821.85 L173.56,1821.45 L173.41,1821.17 L173.22,1821.06 L173.03,1821.01 L172.83,1820.95 L172.64,1820.89 L172.44,1820.83 L172.25,1820.76 L172.06,1820.68 L171.87,1820.61 L171.68,1820.53 L171.5,1820.44 L171.31,1820.36 L171.13,1820.27 L170.95,1820.17 L170.77,1820.07 L170.59,1819.97 L170.38,1819.92 L170.08,1820.01 L169.71,1820.19 L169.27,1820.44 L168.8,1820.71 L168.31,1820.96 L167.84,1821.16 L167.41,1821.28 L167.06,1821.29 L166.82,1821.17 L166.62,1820.99 L166.42,1820.8 L166.23,1820.62 L166.05,1820.43 L165.86,1820.23 L165.68,1820.03 L165.56,1819.79 L165.57,1819.44 L165.69,1819.01 L165.89,1818.54 L166.14,1818.05 L166.41,1817.58 L166.66,1817.14 L166.84,1816.77 L166.93,1816.47 L166.88,1816.26 L166.78,1816.08 L166.68,1815.9 L166.58,1815.72 L166.49,1815.54 L166.41,1815.35 L166.32,1815.17 L166.24,1814.98 L166.17,1814.79 L166.09,1814.6 L166.02,1814.41 L165.96,1814.21 L165.9,1814.02 L165.84,1813.82 L165.79,1813.63 L165.68,1813.44 L165.4,1813.29 L165,1813.16 L164.52,1813.02 L164,1812.88 L163.48,1812.71 L163,1812.52 L162.61,1812.3 L162.35,1812.06 L162.27,1811.8 L162.26,1811.53 L162.25,1811.27 L162.25,1811 L162.25,1810.73 L162.26,1810.47 L162.27,1810.2 L162.35,1809.94 L162.61,1809.7 L163,1809.48 L163.48,1809.29 L164,1809.12 L164.52,1808.98 L165,1808.84 L165.4,1808.71 L165.68,1808.56 L165.79,1808.37 L165.84,1808.18 L165.9,1807.98 L165.96,1807.79 L166.02,1807.59 L166.09,1807.4 L166.17,1807.21 L166.24,1807.02 L166.32,1806.83 L166.41,1806.65 L166.49,1806.46 L166.58,1806.28 L166.68,1806.1 L166.78,1805.92 L166.88,1805.74 L166.93,1805.53 L166.84,1805.23 L166.66,1804.86 L166.41,1804.42 L166.14,1803.95 L165.89,1803.46 L165.69,1802.99 L165.57,1802.56 L165.56,1802.21 L165.68,1801.97 L165.86,1801.77 L166.05,1801.57 L166.23,1801.38 L166.42,1801.2 L166.62,1801.01 L166.82,1800.83 L167.06,1800.71 L167.41,1800.72 L167.84,1800.84 L168.31,1801.04 L168.8,1801.29 L169.27,1801.56 L169.71,1801.81 L170.08,1801.99 L170.38,1802.08 L170.59,1802.03 L170.77,1801.93 L170.95,1801.83 L171.13,1801.73 L171.31,1801.64 L171.5,1801.56 L171.68,1801.47 L171.87,1801.39 L172.06,1801.32 L172.25,1801.24 L172.44,1801.17 L172.64,1801.11 L172.83,1801.05 L173.03,1800.99 L173.22,1800.94 L173.41,1800.83 L173.56,1800.55 L173.69,1800.15 L173.83,1799.67 L173.97,1799.15 L174.14,1798.63 L174.33,1798.15 L174.55,1797.76 L174.79,1797.5 L175.05,1797.42 L175.32,1797.41 L175.58,1797.4 Z" fill="none" stroke="#6b7591" stroke-width="2" stroke-linecap="round" stroke-linejoin="round" /><circle cx="175.8" cy="1811" r="4.3" fill="none" stroke="#6b7591" stroke-width="2"/><path d="M536.8,187.2 L545.6,196 L554.4,187.2" fill="none" stroke="#7b7b7e" stroke-width="2.4" stroke-linecap="round" stroke-linejoin="round" /><path d="M541.2,425.8 L550,434.6 L541.2,443.4" fill="none" stroke="#7b7b7e" stroke-width="2.4" stroke-linecap="round" stroke-linejoin="round" /><path d="M736.45,385.2 L736.32,386.13 L735.96,387.01 L735.44,387.83 L734.88,388.6 L734.37,389.33 L733.98,390.08 L733.73,390.88 L733.57,391.76 L733.42,392.7 L733.21,393.65 L732.84,394.53 L732.28,395.28 L731.53,395.84 L730.65,396.21 L729.7,396.42 L728.76,396.57 L727.88,396.73 L727.08,396.98 L726.33,397.37 L725.6,397.88 L724.83,398.44 L724.01,398.96 L723.13,399.32 L722.2,399.45 L721.27,399.32 L720.39,398.96 L719.57,398.44 L718.8,397.88 L718.07,397.37 L717.32,396.98 L716.52,396.73 L715.64,396.57 L714.7,396.42 L713.75,396.21 L712.87,395.84 L712.12,395.28 L711.56,394.53 L711.19,393.65 L710.98,392.7 L710.83,391.76 L710.67,390.88 L710.42,390.08 L710.03,389.33 L709.52,388.6 L708.96,387.83 L708.44,387.01 L708.08,386.13 L707.95,385.2 L708.08,384.27 L708.44,383.39 L708.96,382.57 L709.52,381.8 L710.03,381.07 L710.42,380.32 L710.67,379.52 L710.83,378.64 L710.98,377.7 L711.19,376.75 L711.56,375.87 L712.12,375.12 L712.87,374.56 L713.75,374.19 L714.7,373.98 L715.64,373.83 L716.52,373.67 L717.32,373.42 L718.07,373.03 L718.8,372.52 L719.57,371.96 L720.39,371.44 L721.27,371.08 L722.2,370.95 L723.13,371.08 L724.01,371.44 L724.83,371.96 L725.6,372.52 L726.33,373.03 L727.08,373.42 L727.88,373.67 L728.76,373.83 L729.7,373.98 L730.65,374.19 L731.53,374.56 L732.28,375.12 L732.84,375.87 L733.21,376.75 L733.42,377.7 L733.57,378.64 L733.73,379.52 L733.98,380.32 L734.37,381.07 L734.88,381.8 L735.44,382.57 L735.96,383.39 L736.32,384.27 Z" fill="none" stroke="#2a63e6" stroke-width="2.5" stroke-linecap="round" stroke-linejoin="round" /><path d="M717.2,385.8 L720.9,389.4 L726.9,380.9" fill="none" stroke="#2a63e6" stroke-width="2.5" stroke-linecap="round" stroke-linejoin="round" /><path d="M1003.5,379.8 L1011.8,391.2 L1020.1,379.8" fill="none" stroke="#b9b9bc" stroke-width="1.8" stroke-linecap="butt" stroke-linejoin="miter" /><path d="M1103.9,370 L1104.17,370 L1104.44,370.01 L1104.71,370.02 L1104.97,370.11 L1105.21,370.36 L1105.43,370.75 L1105.63,371.23 L1105.79,371.75 L1105.94,372.27 L1106.08,372.76 L1106.21,373.16 L1106.37,373.43 L1106.55,373.54 L1106.75,373.59 L1106.95,373.65 L1107.14,373.71 L1107.34,373.78 L1107.53,373.85 L1107.73,373.92 L1107.92,374 L1108.11,374.08 L1108.3,374.16 L1108.48,374.25 L1108.67,374.34 L1108.85,374.44 L1109.03,374.54 L1109.21,374.64 L1109.42,374.69 L1109.72,374.61 L1110.1,374.42 L1110.54,374.18 L1111.01,373.91 L1111.5,373.66 L1111.97,373.46 L1112.4,373.34 L1112.76,373.33 L1113,373.46 L1113.2,373.64 L1113.4,373.82 L1113.59,374.01 L1113.78,374.2 L1113.96,374.4 L1114.14,374.6 L1114.27,374.84 L1114.26,375.2 L1114.14,375.63 L1113.94,376.1 L1113.69,376.59 L1113.42,377.06 L1113.18,377.5 L1112.99,377.88 L1112.91,378.18 L1112.96,378.39 L1113.06,378.57 L1113.16,378.75 L1113.26,378.93 L1113.35,379.12 L1113.44,379.3 L1113.52,379.49 L1113.6,379.68 L1113.68,379.87 L1113.75,380.07 L1113.82,380.26 L1113.89,380.46 L1113.95,380.65 L1114.01,380.85 L1114.06,381.05 L1114.17,381.23 L1114.44,381.39 L1114.84,381.52 L1115.33,381.66 L1115.85,381.81 L1116.37,381.97 L1116.85,382.17 L1117.24,382.39 L1117.49,382.63 L1117.58,382.89 L1117.59,383.16 L1117.6,383.43 L1117.6,383.7 L1117.6,383.97 L1117.59,384.24 L1117.58,384.51 L1117.49,384.77 L1117.24,385.01 L1116.85,385.23 L1116.37,385.43 L1115.85,385.59 L1115.33,385.74 L1114.84,385.88 L1114.44,386.01 L1114.17,386.17 L1114.06,386.35 L1114.01,386.55 L1113.95,386.75 L1113.89,386.94 L1113.82,387.14 L1113.75,387.33 L1113.68,387.53 L1113.6,387.72 L1113.52,387.91 L1113.44,388.1 L1113.35,388.28 L1113.26,388.47 L1113.16,388.65 L1113.06,388.83 L1112.96,389.01 L1112.91,389.22 L1112.99,389.52 L1113.18,389.9 L1113.42,390.34 L1113.69,390.81 L1113.94,391.3 L1114.14,391.77 L1114.26,392.2 L1114.27,392.56 L1114.14,392.8 L1113.96,393 L1113.78,393.2 L1113.59,393.39 L1113.4,393.58 L1113.2,393.76 L1113,393.94 L1112.76,394.07 L1112.4,394.06 L1111.97,393.94 L1111.5,393.74 L1111.01,393.49 L1110.54,393.22 L1110.1,392.98 L1109.72,392.79 L1109.42,392.71 L1109.21,392.76 L1109.03,392.86 L1108.85,392.96 L1108.67,393.06 L1108.48,393.15 L1108.3,393.24 L1108.11,393.32 L1107.92,393.4 L1107.73,393.48 L1107.53,393.55 L1107.34,393.62 L1107.14,393.69 L1106.95,393.75 L1106.75,393.81 L1106.55,393.86 L1106.37,393.97 L1106.21,394.24 L1106.08,394.64 L1105.94,395.13 L1105.79,395.65 L1105.63,396.17 L1105.43,396.65 L1105.21,397.04 L1104.97,397.29 L1104.71,397.38 L1104.44,397.39 L1104.17,397.4 L1103.9,397.4 L1103.63,397.4 L1103.36,397.39 L1103.09,397.38 L1102.83,397.29 L1102.59,397.04 L1102.37,396.65 L1102.17,396.17 L1102.01,395.65 L1101.86,395.13 L1101.72,394.64 L1101.59,394.24 L1101.43,393.97 L1101.25,393.86 L1101.05,393.81 L1100.85,393.75 L1100.66,393.69 L1100.46,393.62 L1100.27,393.55 L1100.07,393.48 L1099.88,393.4 L1099.69,393.32 L1099.5,393.24 L1099.32,393.15 L1099.13,393.06 L1098.95,392.96 L1098.77,392.86 L1098.59,392.76 L1098.38,392.71 L1098.08,392.79 L1097.7,392.98 L1097.26,393.22 L1096.79,393.49 L1096.3,393.74 L1095.83,393.94 L1095.4,394.06 L1095.04,394.07 L1094.8,393.94 L1094.6,393.76 L1094.4,393.58 L1094.21,393.39 L1094.02,393.2 L1093.84,393 L1093.66,392.8 L1093.53,392.56 L1093.54,392.2 L1093.66,391.77 L1093.86,391.3 L1094.11,390.81 L1094.38,390.34 L1094.62,389.9 L1094.81,389.52 L1094.89,389.22 L1094.84,389.01 L1094.74,388.83 L1094.64,388.65 L1094.54,388.47 L1094.45,388.28 L1094.36,388.1 L1094.28,387.91 L1094.2,387.72 L1094.12,387.53 L1094.05,387.33 L1093.98,387.14 L1093.91,386.94 L1093.85,386.75 L1093.79,386.55 L1093.74,386.35 L1093.63,386.17 L1093.36,386.01 L1092.96,385.88 L1092.47,385.74 L1091.95,385.59 L1091.43,385.43 L1090.95,385.23 L1090.56,385.01 L1090.31,384.77 L1090.22,384.51 L1090.21,384.24 L1090.2,383.97 L1090.2,383.7 L1090.2,383.43 L1090.21,383.16 L1090.22,382.89 L1090.31,382.63 L1090.56,382.39 L1090.95,382.17 L1091.43,381.97 L1091.95,381.81 L1092.47,381.66 L1092.96,381.52 L1093.36,381.39 L1093.63,381.23 L1093.74,381.05 L1093.79,380.85 L1093.85,380.65 L1093.91,380.46 L1093.98,380.26 L1094.05,380.07 L1094.12,379.87 L1094.2,379.68 L1094.28,379.49 L1094.36,379.3 L1094.45,379.12 L1094.54,378.93 L1094.64,378.75 L1094.74,378.57 L1094.84,378.39 L1094.89,378.18 L1094.81,377.88 L1094.62,377.5 L1094.38,377.06 L1094.11,376.59 L1093.86,376.1 L1093.66,375.63 L1093.54,375.2 L1093.53,374.84 L1093.66,374.6 L1093.84,374.4 L1094.02,374.2 L1094.21,374.01 L1094.4,373.82 L1094.6,373.64 L1094.8,373.46 L1095.04,373.33 L1095.4,373.34 L1095.83,373.46 L1096.3,373.66 L1096.79,373.91 L1097.26,374.18 L1097.7,374.42 L1098.08,374.61 L1098.38,374.69 L1098.59,374.64 L1098.77,374.54 L1098.95,374.44 L1099.13,374.34 L1099.32,374.25 L1099.5,374.16 L1099.69,374.08 L1099.88,374 L1100.07,373.92 L1100.27,373.85 L1100.46,373.78 L1100.66,373.71 L1100.85,373.65 L1101.05,373.59 L1101.25,373.54 L1101.43,373.43 L1101.59,373.16 L1101.72,372.76 L1101.86,372.27 L1102.01,371.75 L1102.17,371.23 L1102.37,370.75 L1102.59,370.36 L1102.83,370.11 L1103.09,370.02 L1103.36,370.01 L1103.63,370 Z" fill="none" stroke="#3a4256" stroke-width="2.4" stroke-linecap="round" stroke-linejoin="round" /><circle cx="1103.8" cy="383.8" r="4.4" fill="none" stroke="#3a4256" stroke-width="2.4"/><circle cx="2926" cy="369.2" r="2.7" fill="#656567"/><circle cx="2926" cy="379.1" r="2.7" fill="#656567"/><circle cx="2926" cy="389" r="2.7" fill="#656567"/><path d="M1123.5,555.2 L1161.5,555.2" fill="none" stroke="#8b8b8d" stroke-width="3" stroke-linecap="round" stroke-linejoin="round" /><path d="M1142.5,536 L1142.5,574.5" fill="none" stroke="#8b8b8d" stroke-width="3" stroke-linecap="round" stroke-linejoin="round" /><path d="M918.5,754.8 L940.2,754.8" fill="none" stroke="#3a4256" stroke-width="2.2" stroke-linecap="round" stroke-linejoin="round" /><path d="M918.5,761.4 L933.8,761.4" fill="none" stroke="#3a4256" stroke-width="2.2" stroke-linecap="round" stroke-linejoin="round" /><path d="M918.5,768 L933.8,768" fill="none" stroke="#3a4256" stroke-width="2.2" stroke-linecap="round" stroke-linejoin="round" /><path d="M939.7,762 L939.7,779.5" fill="none" stroke="#3a4256" stroke-width="2.2" stroke-linecap="round" stroke-linejoin="round" /><path d="M933.5,773.6 L939.7,779.8 L945.9,773.6" fill="none" stroke="#3a4256" stroke-width="2.2" stroke-linecap="round" stroke-linejoin="round" /><path d="M1186.6,772.7 H1184 A3.5,3.5 0 0 1 1180.5,769.2 V757.5 A3.5,3.5 0 0 1 1184,754 H1195 A3.5,3.5 0 0 1 1198.5,757.5 V760.3" fill="none" stroke="#3a4256" stroke-width="2.1" stroke-linecap="round" stroke-linejoin="round" /><path d="M1190.1,760.3 H1200.3 A3.5,3.5 0 0 1 1203.8,763.8 V774.9 A3.5,3.5 0 0 1 1200.3,778.4 H1190.1 A3.5,3.5 0 0 1 1186.6,774.9 V763.8 A3.5,3.5 0 0 1 1190.1,760.3 Z" fill="none" stroke="#3a4256" stroke-width="2.1" stroke-linecap="round" stroke-linejoin="round" /><path d="M1419.6,756.6 Q1432,755.2 1444.4,756.6" fill="none" stroke="#c23b2f" stroke-width="2.1" stroke-linecap="round" stroke-linejoin="round" /><path d="M1427,756 V753.5 A3,3 0 0 1 1430,750.9 H1434.3 A3,3 0 0 1 1437.3,753.5 V756" fill="none" stroke="#c23b2f" stroke-width="2.1" stroke-linecap="round" stroke-linejoin="round" /><path d="M1421.8,757.6 L1423.6,776.6 A3.2,3.2 0 0 0 1426.8,779.6 H1437.6 A3.2,3.2 0 0 0 1440.8,776.6 L1442.4,757.6" fill="none" stroke="#c23b2f" stroke-width="2.1" stroke-linecap="round" stroke-linejoin="round" /><path d="M1428.6,761.2 L1429.4,775.2" fill="none" stroke="#c23b2f" stroke-width="2" stroke-linecap="round" stroke-linejoin="round" /><path d="M1435.8,761.2 L1435,775.2" fill="none" stroke="#c23b2f" stroke-width="2" stroke-linecap="round" stroke-linejoin="round" /><rect x="712.9" y="849" width="29" height="28.6" rx="6" fill="#bdbdc0"/><path d="M718.6,863.3 L736.2,863.3" fill="none" stroke="#ffffff" stroke-width="3" stroke-linecap="butt" stroke-linejoin="round" /><rect x="706.7" y="927" width="39.4" height="39" rx="10" fill="#94adf0"/><rect x="712" y="932" width="29" height="29" rx="6" fill="#2d5fe0"/><path d="M718.6,946.8 L724,952 L735,940.6" fill="none" stroke="#ffffff" stroke-width="3" stroke-linecap="butt" stroke-linejoin="miter" /><rect x="712.9" y="1007.8" width="27.6" height="27.6" rx="6" fill="#fff" stroke="#c4c4c7" stroke-width="1.5"/><rect x="712.9" y="1083.4" width="27.6" height="27.6" rx="6" fill="#fff" stroke="#c4c4c7" stroke-width="1.5"/><rect x="712.9" y="1159" width="27.6" height="27.6" rx="6" fill="#fff" stroke="#c4c4c7" stroke-width="1.5"/><rect x="712.9" y="1234.6" width="27.6" height="27.6" rx="6" fill="#fff" stroke="#c4c4c7" stroke-width="1.5"/><rect x="712.9" y="1310.2" width="27.6" height="27.6" rx="6" fill="#fff" stroke="#c4c4c7" stroke-width="1.5"/><rect x="712.9" y="1385.8" width="27.6" height="27.6" rx="6" fill="#fff" stroke="#c4c4c7" stroke-width="1.5"/><rect x="712.9" y="1461.4" width="27.6" height="27.6" rx="6" fill="#fff" stroke="#c4c4c7" stroke-width="1.5"/><rect x="712.9" y="1537" width="27.6" height="27.6" rx="6" fill="#fff" stroke="#c4c4c7" stroke-width="1.5"/><rect x="712.9" y="1612.6" width="27.6" height="27.6" rx="6" fill="#fff" stroke="#c4c4c7" stroke-width="1.5"/><rect x="712.9" y="1688.2" width="27.6" height="27.6" rx="6" fill="#fff" stroke="#c4c4c7" stroke-width="1.5"/><rect x="712.9" y="1763.8" width="27.6" height="27.6" rx="6" fill="#fff" stroke="#c4c4c7" stroke-width="1.5"/><path d="M607.8,990 L598.2,999.2 L607.8,1008.4" fill="none" stroke="#1f2330" stroke-width="3.6" stroke-linecap="round" stroke-linejoin="round" /><path d="M2593,1853.8 L2593,1869.8" fill="none" stroke="#c6c6c9" stroke-width="2.4" stroke-linecap="butt" stroke-linejoin="round" /><path d="M2606.6,1854.2 L2598.6,1862 L2606.6,1869.8" fill="none" stroke="#c6c6c9" stroke-width="2.4" stroke-linecap="round" stroke-linejoin="round" /><path d="M2654.6,1854.2 L2646.6,1862 L2654.6,1869.8" fill="none" stroke="#c6c6c9" stroke-width="2.4" stroke-linecap="round" stroke-linejoin="round" /><path d="M2845,1854.2 L2853,1862 L2845,1869.8" fill="none" stroke="#c6c6c9" stroke-width="2.4" stroke-linecap="round" stroke-linejoin="round" /><path d="M2892.8,1854.2 L2900.8,1862 L2892.8,1869.8" fill="none" stroke="#c6c6c9" stroke-width="2.4" stroke-linecap="round" stroke-linejoin="round" /><path d="M2905.8,1853.8 L2905.8,1869.8" fill="none" stroke="#c6c6c9" stroke-width="2.4" stroke-linecap="butt" stroke-linejoin="round" /><path d="M2281.5,1856.8 L2296,1856.8 L2288.75,1866.5 Z" fill="#25272b"/></svg>
</div></body></html>
